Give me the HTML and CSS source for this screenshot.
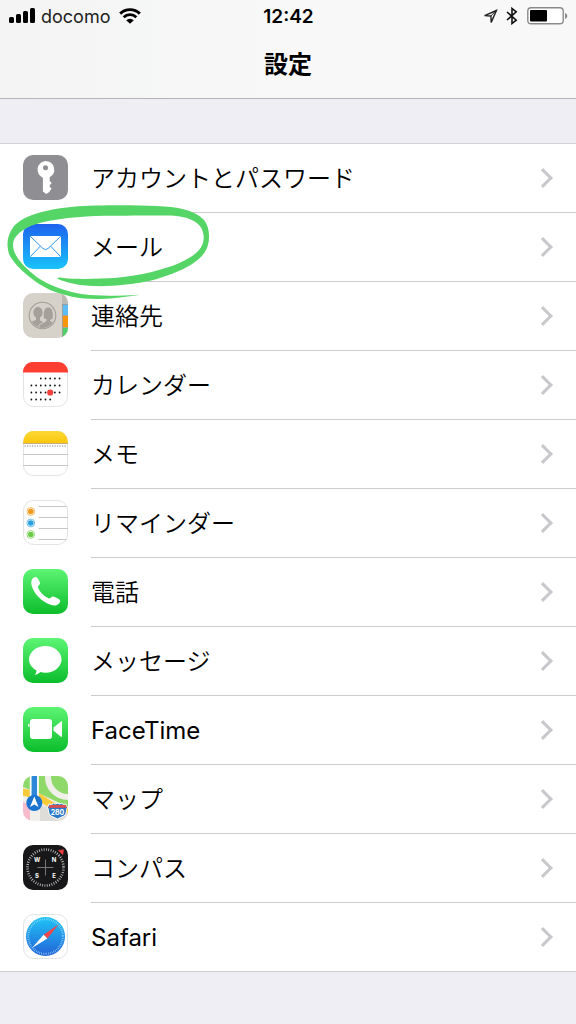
FILE: index.html
```html
<!DOCTYPE html>
<html lang="ja">
<head>
    <meta charset="UTF-8">
    <meta name="viewport" content="width=device-width, initial-scale=1.0">
    <title>設定</title>
    <link rel="stylesheet" href="styles.css">
</head>
<body>
    <header class="header">
        <div class="status-bar">
            <div class="status-left">
                <svg class="signal" width="26" height="16" viewBox="0 0 26 16">
                    <rect x="0" y="9" width="5" height="6" rx="1.5"/>
                    <rect x="7" y="6" width="5" height="9" rx="1.5"/>
                    <rect x="14" y="3" width="5" height="12" rx="1.5"/>
                    <rect x="21" y="0" width="5" height="15" rx="1.5"/>
                </svg>
                <span class="carrier">docomo</span>
                <svg class="wifi" width="22" height="16" viewBox="0 0 22 16">
                    <path d="M1.2 5.6a14 14 0 0 1 19.6 0M4.7 9.2a9 9 0 0 1 12.6 0" fill="none" stroke="#000" stroke-width="2.9"/>
                    <path d="M7.2 12.2a5.4 5.4 0 0 1 7.6 0L11 15.8z"/>
                </svg>
            </div>
            <time class="clock">12:42</time>
            <div class="status-right">
                <svg width="15" height="15" viewBox="0 0 15 15">
                    <path d="M13.4 1.5L1.6 6.6l6.3.4.3 6.4z" fill="none" stroke="#222" stroke-width="1.4" stroke-linejoin="miter"/>
                    <path d="M13.5 1.3L7.6 7.2" stroke="#222" stroke-width="1"/>
                </svg>
                <svg class="bluetooth" width="12" height="18" viewBox="0 0 12 18">
                    <path d="M1 5l9.2 8.1L6 16.5v-15l4.2 3.4L1 13" fill="none" stroke="#111" stroke-width="1.6"/>
                </svg>
                <svg class="battery" width="41" height="18" viewBox="0 0 41 18">
                    <rect x="0.8" y="0.8" width="35.4" height="16" rx="3.4" fill="#fff" stroke="#8a8a8c" stroke-width="1.4"/>
                    <rect x="3" y="3" width="17" height="11.6" rx="1"/>
                    <path d="M38 6c3 1 3 5 0 6z" fill="#8a8a8c"/>
                </svg>
            </div>
        </div>
        <h1 class="title">設定</h1>
    </header>

    <main>
        <ul class="settings-list">
            <li class="row">
                <a href="#" class="row-link">
                    <svg class="icon" viewBox="0 0 45 45">
                        <rect width="45" height="45" rx="10" fill="#8e8e93"/>
                        <path fill="#fff" fill-rule="evenodd" d="M22.5 6a8.7 8.7 0 0 1 4.2 16.3v3.7l2 2-2 2.2v1.6l2 2-2 2.2v.8l-3.4 2.2-3.4-2.4V22.700A8.700 8.700 0 0 1 22.500 6zm0 4.200a2.500 2.500 0 1 0 0 5 2.500 2.500 0 0 0 0-5z"/>
                    </svg>
                    <span class="row-body"><span class="label">アカウントとパスワード</span><span class="chevron"></span></span>
                </a>
            </li>
            <li class="row">
                <a href="#" class="row-link">
                    <svg class="icon" viewBox="0 0 45 45">
                        <defs>
                            <linearGradient id="mail-blue" x1="0" y1="0" x2="0" y2="1">
                                <stop offset="0" stop-color="#1e62ee"/>
                                <stop offset="1" stop-color="#19c3fb"/>
                            </linearGradient>
                        </defs>
                        <rect width="45" height="45" rx="10" fill="url(#mail-blue)"/>
                        <rect x="7" y="12" width="31" height="21" rx="1.5" fill="#fff"/>
                        <path d="M7.5 12.5l12.500 12q2.500 2.200 5 0l12.500-12M7.500 32.500l9.800-10.300M37.500 32.500l-9.800-10.300" fill="none" stroke="#2e96f3" stroke-width="1"/>
                    </svg>
                    <span class="row-body"><span class="label">メール</span><span class="chevron"></span></span>
                </a>
                <!-- hand-drawn ring around the mail row -->
                <svg class="marker" width="204" height="100" viewBox="18 189 612 300">
                    <path fill="#55d566" d="M416 465C380 470 340 477 300 477C240 478 195 468 150 450C100 425 45 380 27 342C18 310 22 285 42 258C75 222 150 207 220 200C290 195 400 195 470 198C530 200 585 210 612 240C632 265 632 310 614 337C590 375 520 403 460 420C400 434 330 440 280 438C240 437 200 428 172 416C176 411 180 413 190 414C240 419 300 416 350 413C420 406 490 390 540 368C590 344 610 325 611 295C613 255 580 235 535 229C500 225 420 228 340 227C270 227 190 232 130 246C80 258 47 280 40 305C33 340 65 375 110 411C150 438 200 455 250 463C310 470 360 467 416 464Z"/>
                </svg>
            </li>
            <li class="row">
                <a href="#" class="row-link">
                    <svg class="icon" viewBox="0 0 45 45">
                        <clipPath id="tile"><rect width="45" height="45" rx="10"/></clipPath>
                        <g clip-path="url(#tile)">
                            <rect width="45" height="45" fill="#d6d2ca"/>
                            <rect x="39" width="6" height="12" fill="#bdbab4"/>
                            <rect x="39.5" y="11.5" width="6" height="10.5" fill="#5fbdf5"/>
                            <rect x="39.5" y="23" width="6" height="11" fill="#fb9509"/>
                            <rect x="39.5" y="35" width="6" height="10" fill="#52d06b"/>
                            <path d="M39.5 11v34M39 11.500h6M39 22.500h6M39 34.500h6" stroke="#9b978f" stroke-width=".8"/>
                            <clipPath id="people"><circle cx="19.5" cy="22.5" r="12.5"/></clipPath>
                            <g clip-path="url(#people)" fill="#a5a099">
                                <ellipse cx="15" cy="19.5" rx="4.6" ry="5.7"/>
                                <path d="M13 23h4v4.500l4 2V37H5v-7l8-3z"/>
                                <path d="M20.500 26c-.7-6 .2-12 4.700-12s5.500 6 4.800 12l-2.500 1v1l7 3v8H16v-7l7-4v-2z" stroke="#d6d2ca" stroke-width=".8"/>
                            </g>
                            <circle cx="19.5" cy="22.5" r="13.3" fill="none" stroke="#a29e96" stroke-width="1.1"/>
                        </g>
                    </svg>
                    <span class="row-body"><span class="label">連絡先</span><span class="chevron"></span></span>
                </a>
            </li>
            <li class="row">
                <a href="#" class="row-link">
                    <svg class="icon" viewBox="0 0 45 45">
                        <rect x=".5" y=".5" width="44" height="44" rx="10" fill="#fff" stroke="#e3e3e5"/>
                        <path d="M0 10.500A10 10 0 0 1 10 0h25a10 10 0 0 1 10 10.500z" fill="#fc3d31"/>
                        <g stroke="#111" stroke-width="1.8" stroke-linecap="round" stroke-dasharray="0 4.7">
                            <path d="M17.800 16.500h19"/>
                            <path d="M8.400 23.500h28.400"/>
                            <path d="M8.400 30.500h28.400"/>
                            <path d="M8.400 37.500h19"/>
                        </g>
                        <circle cx="27.2" cy="30.5" r="3.1" fill="#f5413c"/>
                    </svg>
                    <span class="row-body"><span class="label">カレンダー</span><span class="chevron"></span></span>
                </a>
            </li>
            <li class="row">
                <a href="#" class="row-link">
                    <svg class="icon" viewBox="0 0 45 45">
                        <defs>
                            <linearGradient id="memo-yellow" x1="0" y1="0" x2="0" y2="1">
                                <stop offset="0" stop-color="#fbd838"/>
                                <stop offset="1" stop-color="#fac70c"/>
                            </linearGradient>
                        </defs>
                        <rect x=".5" y=".5" width="44" height="44" rx="10" fill="#fff" stroke="#e3e3e5"/>
                        <path d="M0 12A10 12 0 0 1 10 0h25a10 12 0 0 1 10 12z" fill="url(#memo-yellow)"/>
                        <path d="M0 12.500h45" stroke="#c5ac76"/>
                        <path d="M1.500 15h42" stroke="#aaa" stroke-width="1.3" stroke-dasharray="1.2 1.3"/>
                        <path d="M0 23.500h45M0 34.500h45" stroke="#c6c6c8"/>
                    </svg>
                    <span class="row-body"><span class="label">メモ</span><span class="chevron"></span></span>
                </a>
            </li>
            <li class="row">
                <a href="#" class="row-link">
                    <svg class="icon" viewBox="0 0 45 45">
                        <rect x=".5" y=".5" width="44" height="44" rx="10" fill="#fff" stroke="#e3e3e5"/>
                        <path d="M15.500 6.500h28M15.500 17.500H45M15.500 28.500H45M15.500 39.500h28" stroke="#c6c6c8"/>
                        <g fill="none" stroke-width="1">
                            <circle cx="7.8" cy="11.5" r="3.9" stroke="#f3b968"/>
                            <circle cx="7.8" cy="23" r="3.9" stroke="#73bfe9"/>
                            <circle cx="7.8" cy="34.5" r="3.9" stroke="#9edb83"/>
                        </g>
                        <circle cx="7.8" cy="11.5" r="2.8" fill="#f09a20"/>
                        <circle cx="7.8" cy="23" r="2.8" fill="#2ba0e0"/>
                        <circle cx="7.8" cy="34.5" r="2.8" fill="#6bcb45"/>
                    </svg>
                    <span class="row-body"><span class="label">リマインダー</span><span class="chevron"></span></span>
                </a>
            </li>
            <li class="row">
                <a href="#" class="row-link">
                    <svg class="icon" viewBox="0 0 45 45">
                        <defs>
                            <linearGradient id="green" x1="0" y1="0" x2="0" y2="1">
                                <stop offset="0" stop-color="#5df574"/>
                                <stop offset="1" stop-color="#0bbd2b"/>
                            </linearGradient>
                        </defs>
                        <rect width="45" height="45" rx="10" fill="url(#green)"/>
                        <path fill="#fff" d="M9 10.500c1-2 3-3 4.300-2.400 1.700 1.500 3.300 4 3.700 6 .2 2-2.400 2.800-2 4.400 1.700 4.300 5.800 8.500 10.500 10.800 1.900.8 2.700-2.200 4.900-1.800 2.200.7 5.300 2.300 6.600 3.600.9 1.300-.6 3.800-3 5-2.500 1.200-6.500.2-10.500-2C15.800 29.700 10.500 23 8.800 17c-.7-2.500-.7-4.700.2-6.500z"/>
                    </svg>
                    <span class="row-body"><span class="label">電話</span><span class="chevron"></span></span>
                </a>
            </li>
            <li class="row">
                <a href="#" class="row-link">
                    <svg class="icon" viewBox="0 0 45 45">
                        <rect width="45" height="45" rx="10" fill="url(#green)"/>
                        <path fill="#fff" d="M22.500 8C31.500 8 38.500 14 38.500 21.300S31.500 34.800 22.500 34.800c-2 0-3.600-.2-5.200-.7-1.500 1.500-3.600 2.700-6 2.700 1.300-1.200 2.200-2.600 2.200-4.400C9 30 6 26 6 21.300 6 14 13.500 8 22.500 8z"/>
                    </svg>
                    <span class="row-body"><span class="label">メッセージ</span><span class="chevron"></span></span>
                </a>
            </li>
            <li class="row">
                <a href="#" class="row-link">
                    <svg class="icon" viewBox="0 0 45 45">
                        <rect width="45" height="45" rx="10" fill="url(#green)"/>
                        <rect x="7" y="12" width="22" height="20" rx="3" fill="#fff"/>
                        <path d="M30.500 20.500l7.500-6c.7-.4 1 0 1 .6v14c0 .7-.4 1-1 .6l-7.500-6z" fill="#fff"/>
                        <path d="M5 17.500l1.500-1v3.500l-1.500-.8z" fill="#fff"/>
                    </svg>
                    <span class="row-body"><span class="label latin">FaceTime</span><span class="chevron"></span></span>
                </a>
            </li>
            <li class="row">
                <a href="#" class="row-link">
                    <svg class="icon" viewBox="0 0 45 45">
                        <g clip-path="url(#tile)">
                            <rect width="45" height="45" fill="#f1efea"/>
                            <path d="M15 0h30v31L15 17z" fill="#8fd96b"/>
                            <circle cx="45" cy="1" r="20" fill="none" stroke="#f1efea" stroke-width="6"/>
                            <path d="M0 0h7v14L0 11z" fill="#8fd96b"/>
                            <path d="M0 26l7 3v16H0z" fill="#f6bccb"/>
                            <path d="M17 29l28 8v8H17z" fill="#dfddd7"/>
                            <path d="M-1 16q13 2 23 9t24 9" fill="none" stroke="#f9cb38" stroke-width="7"/>
                            <path d="M11.300 0v25" stroke="#fff" stroke-width="9"/>
                            <path d="M11.300 0v25" stroke="#2d86d8" stroke-width="5.5"/>
                            <circle cx="11.3" cy="27" r="8" fill="#1b74cf"/>
                            <path d="M11.300 20.500l4.300 10.500-4.300-2.600L7 31z" fill="#fff"/>
                            <path d="M26 28q3 1.300 4.500-.8 1.700 1.500 4 0 2.200 1.500 4 0 1.500 2.100 4 .8l2 3.500c-2 3 0 6-3.500 8.500L34.500 43l-6.500-3c-3.500-2.500-1.500-5.500-3.500-8.500z" fill="#2d79c7" stroke="#fff" stroke-width="1"/>
                            <path d="M26.500 29h16.300l1 2.800H25.500z" fill="#dd4c4c"/>
                            <text x="34.5" y="38.5" class="shield-text">280</text>
                        </g>
                    </svg>
                    <span class="row-body"><span class="label">マップ</span><span class="chevron"></span></span>
                </a>
            </li>
            <li class="row">
                <a href="#" class="row-link">
                    <svg class="icon" viewBox="0 0 45 45">
                        <rect width="45" height="45" rx="10" fill="#171719"/>
                        <circle cx="22.5" cy="22.5" r="18" fill="none" stroke="#c9c9c9" stroke-width="2.6" stroke-dasharray=".8 1.556"/>
                        <path d="M22.500 14.500v16M14.500 22.500h16" stroke="#777" stroke-width="1"/>
                        <path d="M35.500 5.500l5-.8-.7 5z" fill="#f03b40" stroke="#f03b40" stroke-width=".6"/>
                        <g class="compass-text">
                            <text x="14" y="17">W</text>
                            <text x="31" y="17">N</text>
                            <text x="14" y="33">S</text>
                            <text x="31" y="33">E</text>
                        </g>
                    </svg>
                    <span class="row-body"><span class="label">コンパス</span><span class="chevron"></span></span>
                </a>
            </li>
            <li class="row">
                <a href="#" class="row-link">
                    <svg class="icon" viewBox="0 0 45 45">
                        <defs>
                            <linearGradient id="safari-blue" x1="0" y1="0" x2="0" y2="1">
                                <stop offset="0" stop-color="#1fc4f5"/>
                                <stop offset="1" stop-color="#2463d8"/>
                            </linearGradient>
                        </defs>
                        <rect x=".5" y=".5" width="44" height="44" rx="10" fill="#fff" stroke="#e3e3e5"/>
                        <circle cx="22.5" cy="22.5" r="19.5" fill="url(#safari-blue)"/>
                        <circle cx="22.5" cy="22.5" r="17.3" fill="none" stroke="#9fdcf8" stroke-width="2" stroke-dasharray=".6 1.21"/>
                        <path d="M35.500 10.500L20.600 20.700l3.800 3.800z" fill="#f0454a"/>
                        <path d="M9 34l11.600-13.300 3.800 3.800z" fill="#fff"/>
                    </svg>
                    <span class="row-body"><span class="label latin">Safari</span><span class="chevron"></span></span>
                </a>
            </li>
        </ul>
    </main>
</body>
</html>
```
FILE: styles.css
```css
* {
    margin: 0;
    padding: 0;
    box-sizing: border-box;
}
body {
    background: #efeef4;
    font-family: Inter, "Noto Sans CJK JP", sans-serif;
    color: #000;
    min-height: 100vh;
}
.header {
    height: 99px;
    background: linear-gradient(90deg, #f3f4f3, #f8f8f9 50%);
    border-bottom: 1px solid #b4b4b8;
}
.status-bar {
    display: grid;
    grid-template-columns: 1fr auto 1fr;
    align-items: center;
    height: 32px;
    padding: 0 8px 0 9px;
    font-size: 19px;
}
.status-left,
.status-right {
    display: flex;
    align-items: center;
}
.status-right {
    justify-content: flex-end;
}
.carrier {
    margin: 0 9px 0 6px;
    font-size: 18px;
    color: #222;
}
.clock {
    font-weight: 600;
}
.bluetooth {
    margin: 0 9px 0 8px;
}
.title {
    padding-top: 16px;
    font-size: 24px;
    line-height: 34px;
    font-weight: 700;
    text-align: center;
}
.settings-list {
    margin-top: 44px;
    list-style: none;
    background: #fff;
    border-top: 1px solid #d2d1d6;
}
.row {
    position: relative;
}
.row-link {
    display: flex;
    height: 69px;
    padding-left: 23px;
    color: #000;
    text-decoration: none;
}
.icon {
    flex: none;
    width: 45px;
    height: 45px;
    margin: 11px 23px 0 0;
}
.row-body {
    flex: 1;
    display: flex;
    align-items: center;
    justify-content: space-between;
    padding-right: 26px;
    border-bottom: 1px solid #cbcacf;
}
.row:last-child .row-link {
    border-bottom: 1px solid #cbcacf;
}
.row:last-child .row-body {
    border-bottom: none;
}
.label {
    padding-bottom: 4px;
    font-size: 24px;
    font-weight: 350;
}
.latin {
    padding-bottom: 0;
    font-weight: 400;
}
.chevron {
    width: 14px;
    height: 14px;
    border-top: 3px solid #c7c7cc;
    border-right: 3px solid #c7c7cc;
    transform: rotate(45deg);
}
.marker {
    position: absolute;
    top: -10px;
    left: 6px;
    z-index: 1;
    pointer-events: none;
}
.shield-text {
    font-size: 7px;
    font-weight: 700;
    fill: #fff;
    text-anchor: middle;
}
.compass-text {
    font-size: 6px;
    font-weight: 700;
    fill: #fff;
    text-anchor: middle;
}
```
